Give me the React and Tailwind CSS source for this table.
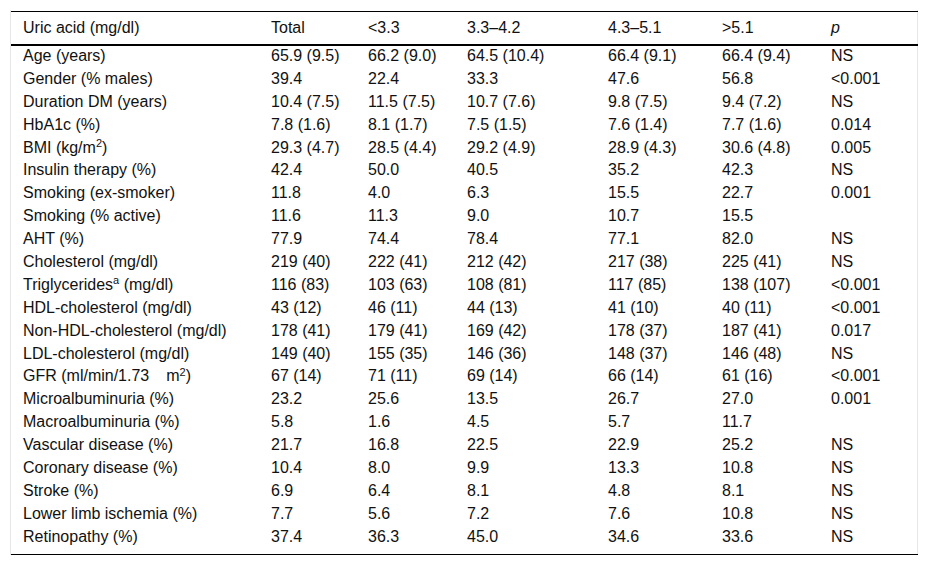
const rows = [
  ['Age (years)', '65.9 (9.5)', '66.2 (9.0)', '64.5 (10.4)', '66.4 (9.1)', '66.4 (9.4)', 'NS'],
  ['Gender (% males)', '39.4', '22.4', '33.3', '47.6', '56.8', '<0.001'],
  ['Duration DM (years)', '10.4 (7.5)', '11.5 (7.5)', '10.7 (7.6)', '9.8 (7.5)', '9.4 (7.2)', 'NS'],
  ['HbA1c (%)', '7.8 (1.6)', '8.1 (1.7)', '7.5 (1.5)', '7.6 (1.4)', '7.7 (1.6)', '0.014'],
  [<>BMI (kg/m<sup className="text-[11px]">2</sup>)</>, '29.3 (4.7)', '28.5 (4.4)', '29.2 (4.9)', '28.9 (4.3)', '30.6 (4.8)', '0.005'],
  ['Insulin therapy (%)', '42.4', '50.0', '40.5', '35.2', '42.3', 'NS'],
  ['Smoking (ex-smoker)', '11.8', '4.0', '6.3', '15.5', '22.7', '0.001'],
  ['Smoking (% active)', '11.6', '11.3', '9.0', '10.7', '15.5', ''],
  ['AHT (%)', '77.9', '74.4', '78.4', '77.1', '82.0', 'NS'],
  ['Cholesterol (mg/dl)', '219 (40)', '222 (41)', '212 (42)', '217 (38)', '225 (41)', 'NS'],
  [<>Triglycerides<sup className="text-[11px]">a</sup> (mg/dl)</>, '116 (83)', '103 (63)', '108 (81)', '117 (85)', '138 (107)', '<0.001'],
  ['HDL-cholesterol (mg/dl)', '43 (12)', '46 (11)', '44 (13)', '41 (10)', '40 (11)', '<0.001'],
  ['Non-HDL-cholesterol (mg/dl)', '178 (41)', '179 (41)', '169 (42)', '178 (37)', '187 (41)', '0.017'],
  ['LDL-cholesterol (mg/dl)', '149 (40)', '155 (35)', '146 (36)', '148 (37)', '146 (48)', 'NS'],
  [<>GFR (ml/min/1.73<span className="inline-block w-[17px]" />m<sup className="text-[11px]">2</sup>)</>, '67 (14)', '71 (11)', '69 (14)', '66 (14)', '61 (16)', '<0.001'],
  ['Microalbuminuria (%)', '23.2', '25.6', '13.5', '26.7', '27.0', '0.001'],
  ['Macroalbuminuria (%)', '5.8', '1.6', '4.5', '5.7', '11.7', ''],
  ['Vascular disease (%)', '21.7', '16.8', '22.5', '22.9', '25.2', 'NS'],
  ['Coronary disease (%)', '10.4', '8.0', '9.9', '13.3', '10.8', 'NS'],
  ['Stroke (%)', '6.9', '6.4', '8.1', '4.8', '8.1', 'NS'],
  ['Lower limb ischemia (%)', '7.7', '5.6', '7.2', '7.6', '10.8', 'NS'],
  ['Retinopathy (%)', '37.4', '36.3', '45.0', '34.6', '33.6', 'NS'],
];

const widths = ['w-[248px]', 'w-[97px]', 'w-[99px]', 'w-[141px]', 'w-[114px]', 'w-[109px]', 'w-[99px]'];

export default function App() {
  return (
    <div className="min-h-screen bg-white pt-[10px] pl-[10px] font-['Liberation_Sans',Arial,sans-serif] text-[16px] text-[#111]">
      <div className="w-[908px] border-x border-[#e6e6e6] pt-px">
        <table className="w-[907px] table-fixed border-collapse">
          <colgroup>
            {widths.map((w, i) => (
              <col key={i} className={w} />
            ))}
          </colgroup>
          <thead>
            <tr className="h-[33px] border-t border-b-2 border-black">
              {['Uric acid (mg/dl)', 'Total', '<3.3', '3.3–4.2', '4.3–5.1', '>5.1'].map((h) => (
                <th key={h} className="pl-3 text-left font-normal">{h}</th>
              ))}
              <th className="pl-3 text-left font-normal italic">p</th>
            </tr>
          </thead>
          <tbody className="border-b border-black">
            {rows.map((r, i) => (
              <tr key={i} className="h-[22.9px]">
                {r.map((c, j) => (
                  <td key={j} className="pl-3 leading-[16px] whitespace-nowrap">{c}</td>
                ))}
              </tr>
            ))}
            <tr className="h-[6px]"><td colSpan={7} /></tr>
          </tbody>
        </table>
      </div>
    </div>
  );
}
